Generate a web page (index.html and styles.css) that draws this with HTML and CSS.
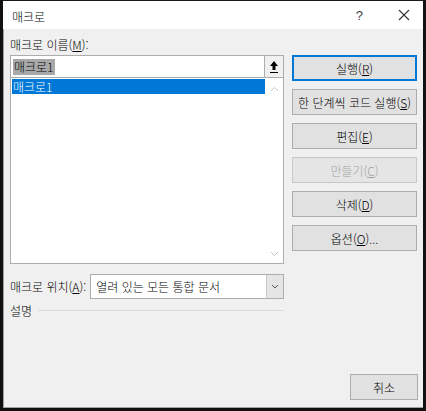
FILE: index.html
```html
<!DOCTYPE html>
<html lang="ko">
<head>
<meta charset="utf-8">
<link rel="stylesheet" href="styles.css">
</head>
<body>
<div class="window">
  <div class="titlebar">
    <span class="title">매크로</span>
    <span class="help">?</span>
    <svg class="close" width="12" height="12" viewBox="0 0 12 12"><path d="M1 1L11 11M11 1L1 11" stroke="#333" stroke-width="1.1"/></svg>
  </div>
  <div class="body">
    <div class="main">
      <div class="left">
        <div class="label">매크로 이름(<u>M</u>):</div>
        <div class="namebox">
          <div class="nameinput"><span class="sel">매크로1</span></div>
          <div class="refbtn">
            <svg width="10" height="14" viewBox="0 0 10 14"><path d="M5 1L1 6H3.5V10H6.5V6H9Z" fill="#000"/><path d="M1 12.5H9" stroke="#000" stroke-width="1"/></svg>
          </div>
        </div>
        <div class="list">
          <div class="items">
            <div class="item active">매크로1</div>
          </div>
          <div class="scroll">
            <svg width="9" height="6" viewBox="0 0 9 6"><path d="M1 5L4.5 1.5L8 5" stroke="#c4c4c4" fill="none"/></svg>
            <svg width="9" height="6" viewBox="0 0 9 6"><path d="M1 1L4.5 4.5L8 1" stroke="#c4c4c4" fill="none"/></svg>
          </div>
        </div>
        <div class="location">
          <span class="label">매크로 위치(<u>A</u>):</span>
          <div class="combo">
            <span class="combotext">열려 있는 모든 통합 문서</span>
            <div class="combobtn"><svg width="8" height="5" viewBox="0 0 8 5"><path d="M1 1L4 4L7 1" stroke="#555" fill="none"/></svg></div>
          </div>
        </div>
        <div class="desc">
          <span class="label">설명</span>
          <span class="rule"></span>
        </div>
      </div>
      <div class="right">
        <button class="btn default">실행(<u>R</u>)</button>
        <button class="btn">한 단계씩 코드 실행(<u>S</u>)</button>
        <button class="btn">편집(<u>E</u>)</button>
        <button class="btn disabled">만들기(<u>C</u>)</button>
        <button class="btn">삭제(<u>D</u>)</button>
        <button class="btn">옵션(<u>O</u>)...</button>
      </div>
    </div>
    <div class="footer">
      <button class="btn cancel">취소</button>
    </div>
  </div>
</div>
</body>
</html>
```
FILE: styles.css
```css
* { box-sizing: border-box; }
html, body { margin: 0; padding: 0; }
body {
  width: 426px;
  height: 411px;
  font-family: "Noto Sans CJK KR", "Noto Sans", sans-serif;
  font-weight: 300;
  font-size: 12px;
  color: #000;
  background: #000;
}
.window {
  width: 426px;
  height: 411px;
  border-top: 1px solid #1a1a1a;
  border-left: 3px solid #111;
  border-right: 3px solid #111;
  border-bottom: 3px solid #111;
  display: flex;
  flex-direction: column;
  background: #f0f0f0;
}
.titlebar {
  height: 28px;
  background: #fff;
  display: flex;
  align-items: center;
  padding-left: 9px;
  padding-right: 13px;
}
.title { flex: 1; font-size: 12px; color: #000; padding-top: 2px; }
.help { font-size: 13px; color: #444; margin-right: 35px; font-family: "Liberation Sans", sans-serif; }
.close { display: block; }
.body {
  flex: 1;
  display: flex;
  flex-direction: column;
  border-left: 1px solid #a0a0a0;
  border-bottom: 1px solid #a0a0a0;
  padding: 6px 5px 7px 6px;
}
.main {
  display: flex;
  gap: 8px;
}
.left {
  width: 274px;
  display: flex;
  flex-direction: column;
}
.label { font-size: 12px; line-height: 18px; white-space: nowrap; padding-top: 1px; }
.namebox {
  margin-top: 1px;
  height: 23px;
  display: flex;
  border: 1px solid #adadad;
  background: #fff;
}
.nameinput {
  flex: 1;
  display: flex;
  align-items: center;
  padding-left: 2px;
}
.sel {
  background: #a8a8a8;
  color: #000;
  line-height: 16px;
  padding: 0 1px;
}
.refbtn {
  width: 19px;
  border-left: 1px solid #adadad;
  background: #f0f0f0;
  display: flex;
  align-items: center;
  justify-content: center;
}
.list {
  height: 186px;
  display: flex;
  border: 1px solid #adadad;
  border-top: none;
  background: #fff;
}
.items { flex: 1; padding: 1px 1px; }
.item {
  height: 15px;
  line-height: 15px;
  padding-left: 1px;
}
.item.active { background: #0078d7; color: #fff; }
.scroll {
  width: 17px;
  display: flex;
  flex-direction: column;
  justify-content: space-between;
  align-items: center;
  padding: 8px 0 6px;
}
.scroll svg { display: block; }
.location {
  margin-top: 10px;
  display: flex;
  align-items: center;
  gap: 4px;
}
.combo {
  flex: 1;
  height: 25px;
  display: flex;
  border: 1px solid #adadad;
  background: #fff;
}
.combotext {
  flex: 1;
  padding-left: 5px;
  line-height: 23px;
}
.combobtn {
  width: 17px;
  background: #e5e5e5;
  border-left: 1px solid #c8c8c8;
  display: flex;
  align-items: center;
  justify-content: center;
}
.desc {
  margin-top: 2px;
  display: flex;
  align-items: center;
  gap: 6px;
}
.rule { flex: 1; height: 1px; background: #dcdcdc; }
.right {
  width: 125px;
  display: flex;
  flex-direction: column;
  gap: 8px;
  padding-top: 20px;
}
.btn {
  height: 26px;
  width: 125px;
  border: 1px solid #adadad;
  background: #e1e1e1;
  font-family: inherit;
  font-weight: 300;
  font-size: 12px;
  color: #000;
  padding: 0;
  white-space: nowrap;
}
.btn u { text-decoration: underline; }
.btn.default { border: 2px solid #0078d7; }
.btn.disabled { color: #a0a0a0; background: #e5e5e5; border-color: #c8c8c8; }
.footer {
  margin-top: auto;
  display: flex;
  justify-content: flex-end;
}
.btn.cancel { width: 68px; }
```
